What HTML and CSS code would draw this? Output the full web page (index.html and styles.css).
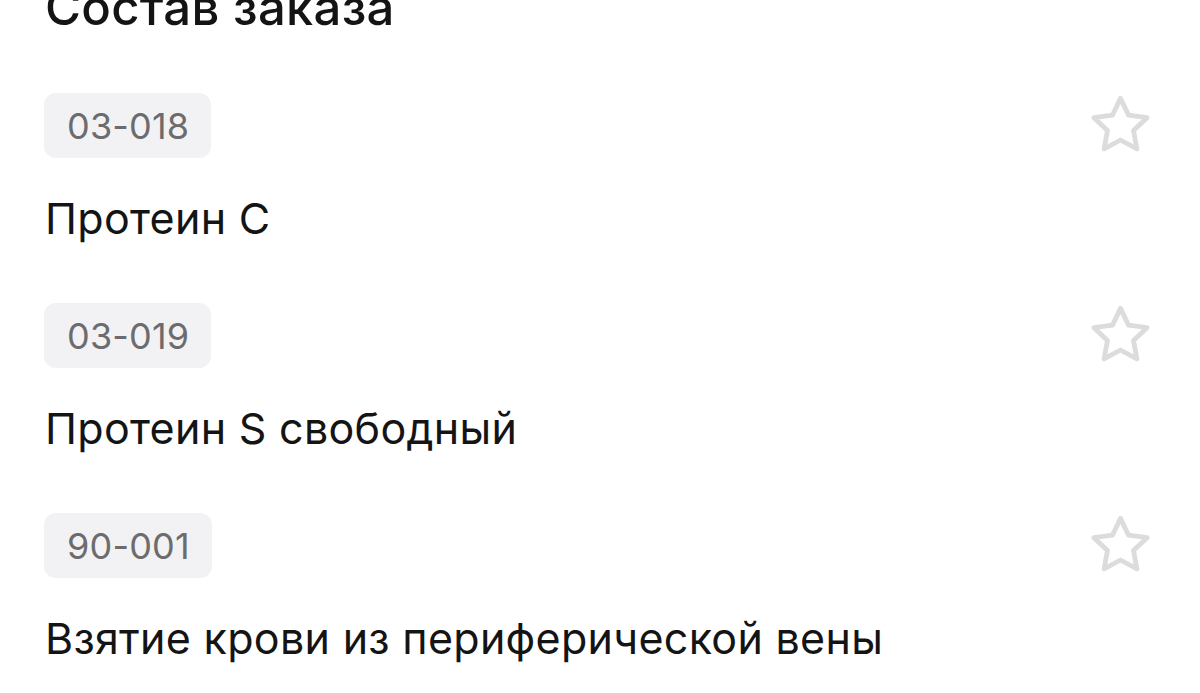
FILE: index.html
```html
<!DOCTYPE html>
<html lang="ru">
<head>
<meta charset="utf-8">
<title>Состав заказа</title>
<link rel="stylesheet" href="styles.css">
</head>
<body>
<main class="page">
  <h1 class="title">Состав заказа</h1>
  <ul class="list">
    <li class="item">
      <div class="info">
        <span class="code">03-018</span>
        <div class="name">Протеин С</div>
      </div>
      <button class="fav" aria-label="В избранное">
        <svg viewBox="1.25 1.75 21.5 20.5" width="61" height="58"><path d="M12 2.6l2.85 5.95 6.55.85-4.8 4.55 1.2 6.5L12 17.3l-5.8 3.15 1.2-6.5-4.8-4.55 6.55-.85z"/></svg>
      </button>
    </li>
    <li class="item">
      <div class="info">
        <span class="code">03-019</span>
        <div class="name">Протеин S свободный</div>
      </div>
      <button class="fav" aria-label="В избранное">
        <svg viewBox="1.25 1.75 21.5 20.5" width="61" height="58"><path d="M12 2.6l2.85 5.95 6.55.85-4.8 4.55 1.2 6.5L12 17.3l-5.8 3.15 1.2-6.5-4.8-4.55 6.55-.85z"/></svg>
      </button>
    </li>
    <li class="item">
      <div class="info">
        <span class="code">90-001</span>
        <div class="name">Взятие крови из периферической вены</div>
      </div>
      <button class="fav" aria-label="В избранное">
        <svg viewBox="1.25 1.75 21.5 20.5" width="61" height="58"><path d="M12 2.6l2.85 5.95 6.55.85-4.8 4.55 1.2 6.5L12 17.3l-5.8 3.15 1.2-6.5-4.8-4.55 6.55-.85z"/></svg>
      </button>
    </li>
  </ul>
</main>
</body>
</html>
```
FILE: styles.css
```css
html, body {
  margin: 0;
  padding: 0;
  background: #ffffff;
}
body {
  font-family: Inter, "Noto Sans", "DejaVu Sans", sans-serif;
  color: #141414;
  overflow: hidden;
}
.page {
  padding: 0 49px 0 44px;
}
.title {
  margin: -20px 0 0 1px;
  font-size: 49px;
  line-height: 56px;
  font-weight: 500;
  letter-spacing: 0.3px;
}
.list {
  list-style: none;
  margin: 57px 0 0;
  padding: 0;
}
.item {
  display: flex;
  justify-content: space-between;
  align-items: flex-start;
  height: 210px;
}
.info {
  display: flex;
  flex-direction: column;
  align-items: flex-start;
}
.code {
  display: flex;
  align-items: center;
  height: 65px;
  padding: 0 22px 0 23px;
  background: #f2f2f4;
  border-radius: 12px;
  font-size: 36px;
  color: #6c6c6e;
  letter-spacing: 0.2px;
}
.name {
  margin: 34px 0 0 1px;
  font-size: 43px;
  line-height: 52px;
  font-weight: 400;
  letter-spacing: 0.3px;
}
.fav {
  margin-top: 3px;
  padding: 0;
  border: 0;
  background: none;
  display: flex;
}
.fav svg path {
  fill: none;
  stroke: #dcdcdc;
  stroke-width: 1.7;
  stroke-linejoin: round;
}
```
